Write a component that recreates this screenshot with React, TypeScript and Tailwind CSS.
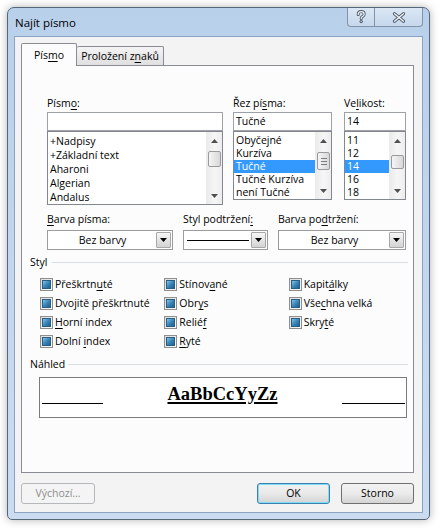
import React from "react";

function U({ children }: { children: React.ReactNode }) {
  return <span className="underline decoration-[1px] underline-offset-[2px]">{children}</span>;
}

function TriUp() {
  return (
    <svg width="7" height="4" viewBox="0 0 7 4">
      <path d="M0 4 L3.5 0 L7 4Z" fill="#505050" />
    </svg>
  );
}

function TriDown({ color = "#505050" }: { color?: string }) {
  return (
    <svg width="7" height="4" viewBox="0 0 7 4">
      <path d="M0 0 L3.5 4 L7 0Z" fill={color} />
    </svg>
  );
}

function VScroll({ thumb, grip }: { thumb: string; grip?: boolean }) {
  return (
    <div className="flex w-[16px] flex-col border-l border-[#ececec] bg-gradient-to-r from-[#ebebeb] via-[#f6f6f6] to-[#ededed]">
      <div className="flex h-[17px] items-center justify-center">
        <TriUp />
      </div>
      <div className="flex-1 px-[1px]">
        <div
          className={`${thumb} flex flex-col items-center justify-center gap-[2px] rounded-[2px] border border-[#9a9a9a] bg-gradient-to-r from-[#f5f5f5] to-[#d8d8d8]`}
        >
          {grip && (
            <>
              <div className="h-px w-[6px] bg-[#7c7c7c]" />
              <div className="h-px w-[6px] bg-[#7c7c7c]" />
              <div className="h-px w-[6px] bg-[#7c7c7c]" />
            </>
          )}
        </div>
      </div>
      <div className="flex h-[17px] items-center justify-center">
        <TriDown />
      </div>
    </div>
  );
}

function Combo({ w, children }: { w: string; children: React.ReactNode }) {
  return (
    <div className={`${w} flex h-[20px] border border-[#9c9c9c] bg-white p-[1px]`}>
      <div className="flex flex-1 items-center justify-center leading-[16px]">{children}</div>
      <div className="flex w-[15px] items-center justify-center rounded-[1px] border border-[#a8a8a8] bg-gradient-to-b from-[#f6f6f6] to-[#d3d3d3]">
        <TriDown color="#000" />
      </div>
    </div>
  );
}

function Check({ children }: { children: React.ReactNode }) {
  return (
    <div className="flex h-[19px] items-center gap-[2px]">
      <span className="flex h-[13px] w-[13px] items-center justify-center border border-[#8e8f8f] bg-gradient-to-br from-[#dedede] to-[#fbfbfb]">
        <span className="h-[9px] w-[9px] border border-[#2a5f85] bg-gradient-to-br from-[#86c3e6] via-[#3a86b8] to-[#215f8e]" />
      </span>
      <span className="leading-[15px]">{children}</span>
    </div>
  );
}

export default function App() {
  const fonts = ["+Nadpisy", "+Základní text", "Aharoni", "Algerian", "Andalus"];
  const styles = ["Obyčejné", "Kurzíva", "Tučné", "Tučné Kurzíva", "není Tučné"];
  const sizes = ["11", "12", "14", "16", "18"];

  return (
    <div className="h-[531px] w-[441px] bg-white pl-[7px] pt-[7px] font-['Open_Sans',sans-serif] text-[10.5px] text-black">
      <div className="flex h-[513px] w-[423px] flex-col rounded-t-[7px] rounded-b-[5px] border border-[#55657a] bg-gradient-to-b from-[#b9d0eb] to-[#cbdcf1] shadow-[0_0_8px_rgba(0,0,0,0.3)]">
        {/* title bar */}
        <div className="flex h-[28px] items-start justify-between pr-[6px]">
          <div className="ml-[7px] mt-[7px] text-[11.5px] leading-[16px]">Najít písmo</div>
          <div className="flex h-[19px] overflow-hidden rounded-b-[4px] border border-t-0 border-[#8193aa] bg-gradient-to-b from-[#dbe7f4] to-[#c6d8ed]">
            <div className="flex w-[27px] items-center justify-center border-r border-[#8193aa]">
              <svg width="12" height="14" viewBox="0 0 12 14">
                <path
                  d="M3.2 4.5 C3.2 2.6 4.6 1.6 6.2 1.6 C7.9 1.6 9.2 2.6 9.2 4.2 C9.2 5.8 7.8 6.2 6.9 6.9 C6.3 7.4 6.2 7.9 6.2 8.6"
                  fill="none"
                  stroke="#4d5a6c"
                  strokeWidth="3"
                  strokeLinecap="round"
                />
                <circle cx="6.2" cy="11.6" r="1.7" fill="#4d5a6c" />
                <path
                  d="M3.2 4.5 C3.2 2.6 4.6 1.6 6.2 1.6 C7.9 1.6 9.2 2.6 9.2 4.2 C9.2 5.8 7.8 6.2 6.9 6.9 C6.3 7.4 6.2 7.9 6.2 8.6"
                  fill="none"
                  stroke="#f4f7fb"
                  strokeWidth="1.2"
                  strokeLinecap="round"
                />
                <circle cx="6.2" cy="11.6" r="0.7" fill="#f4f7fb" />
              </svg>
            </div>
            <div className="flex w-[47px] items-center justify-center">
              <svg width="14" height="11" viewBox="0 0 14 11">
                <path d="M2.5 1.8 L11.5 9.2 M11.5 1.8 L2.5 9.2" stroke="#4d5a6c" strokeWidth="3.2" strokeLinecap="round" />
                <path d="M2.5 1.8 L11.5 9.2 M11.5 1.8 L2.5 9.2" stroke="#f4f7fb" strokeWidth="1.3" strokeLinecap="round" />
              </svg>
            </div>
          </div>
        </div>

        {/* client area */}
        <div className="mx-[6px] mb-[6px] flex flex-1 flex-col border border-[#8ba3c2] bg-[#f3f3f3] pb-[8px] pl-[6px] pr-[8px] pt-[6px]">
          {/* tabs */}
          <div className="flex items-end">
            <div className="relative z-10 -mb-px flex h-[23px] w-[56px] items-center justify-center rounded-t-[2px] border border-b-0 border-[#898c95] bg-[#fcfcfc] pt-[2px]">
              Pís<U>m</U>o
            </div>
            <div className="flex h-[19px] w-[87px] items-center justify-center rounded-t-[2px] border border-b-0 border-l-0 border-[#898c95] bg-gradient-to-b from-[#f4f4f4] to-[#e0e0e0] pt-[1px]">
              Proložení z<U>n</U>aků
            </div>
          </div>

          {/* panel */}
          <div className="flex h-[408px] flex-col border border-[#898c95] bg-[#fcfcfc]">
            {/* font / style / size */}
            <div className="ml-[25px] mt-[30px] flex gap-[10px]">
              <div className="flex w-[176px] flex-col">
                <div className="h-[15px] leading-[15px]">
                  Písm<U>o</U>:
                </div>
                <div className="mt-[1px] h-[19px] border border-[#9ea2a8] bg-white" />
                <div className="flex h-[74px] border border-[#828790] bg-white">
                  <div className="flex-1 pt-[2px]">
                    {fonts.map((f) => (
                      <div key={f} className="h-[14px] pl-[2px] leading-[14px]">
                        {f}
                      </div>
                    ))}
                  </div>
                  <VScroll thumb="mt-[2px] h-[16px]" />
                </div>
              </div>

              <div className="flex w-[99px] flex-col">
                <div className="h-[15px] leading-[15px]">
                  Řez pí<U>s</U>ma:
                </div>
                <div className="mt-[1px] flex h-[19px] items-center border border-[#9ea2a8] bg-white pl-[2px]">Tučné</div>
                <div className="flex h-[69px] border border-[#828790] bg-white">
                  <div className="flex-1 pt-[2px]">
                    {styles.map((s) => (
                      <div
                        key={s}
                        className={
                          s === "Tučné"
                            ? "h-[13px] whitespace-nowrap bg-[#3399ff] pl-[2px] leading-[13px] text-white"
                            : "h-[13px] whitespace-nowrap pl-[2px] leading-[13px]"
                        }
                      >
                        {s}
                      </div>
                    ))}
                  </div>
                  <VScroll thumb="mt-[3px] h-[18px]" grip />
                </div>
              </div>

              <div className="ml-[2px] flex w-[62px] flex-col">
                <div className="h-[15px] leading-[15px]">
                  Ve<U>l</U>ikost:
                </div>
                <div className="mt-[1px] flex h-[19px] items-center border border-[#9ea2a8] bg-white pl-[2px]">14</div>
                <div className="flex h-[69px] border border-[#828790] bg-white">
                  <div className="flex-1 pt-[2px]">
                    {sizes.map((s) => (
                      <div
                        key={s}
                        className={
                          s === "14"
                            ? "h-[13px] bg-[#3399ff] pl-[2px] leading-[13px] text-white"
                            : "h-[13px] pl-[2px] leading-[13px]"
                        }
                      >
                        {s}
                      </div>
                    ))}
                  </div>
                  <VScroll thumb="mt-[6px] h-[14px]" />
                </div>
              </div>
            </div>

            {/* colours / underline */}
            <div className="ml-[25px] mt-[7px] flex gap-[10px]">
              <div className="flex flex-col">
                <div className="h-[15px] leading-[15px]">
                  <U>B</U>arva písma:
                </div>
                <div className="mt-[3px]">
                  <Combo w="w-[126px]">Bez barvy</Combo>
                </div>
              </div>
              <div className="flex flex-col">
                <div className="h-[15px] leading-[15px]">
                  Styl podtržení<U>:</U>
                </div>
                <div className="mt-[3px]">
                  <Combo w="w-[85px]">
                    <div className="mx-[2px] h-px w-full bg-black" />
                  </Combo>
                </div>
              </div>
              <div className="flex flex-col">
                <div className="h-[15px] leading-[15px]">
                  Barva po<U>d</U>tržení:
                </div>
                <div className="mt-[3px]">
                  <Combo w="w-[128px]">Bez barvy</Combo>
                </div>
              </div>
            </div>

            {/* Styl */}
            <div className="ml-[8px] mr-[5px] mt-[5px] flex h-[15px] items-center gap-[5px]">
              <span className="leading-[15px]">Styl</span>
              <div className="h-px flex-1 bg-[#d6dde3]" />
            </div>
            <div className="ml-[18px] mt-[5px] flex">
              <div className="flex w-[126px] flex-col">
                <Check>
                  Přeškrtn<U>u</U>té
                </Check>
                <Check>Dvojitě přeškrtnuté</Check>
                <Check>
                  <U>H</U>orní index
                </Check>
                <Check>
                  Dolní <U>i</U>ndex
                </Check>
              </div>
              <div className="flex w-[126px] flex-col">
                <Check>
                  Stínov<U>a</U>né
                </Check>
                <Check>
                  Obr<U>y</U>s
                </Check>
                <Check>
                  Relié<U>f</U>
                </Check>
                <Check>
                  <U>R</U>yté
                </Check>
              </div>
              <div className="flex w-[126px] flex-col">
                <Check>
                  Kapit<U>á</U>lky
                </Check>
                <Check>
                  Vše<U>c</U>hna velká
                </Check>
                <Check>
                  Skry<U>t</U>é
                </Check>
              </div>
            </div>

            {/* Náhled */}
            <div className="ml-[8px] mr-[5px] mt-[6px] flex h-[15px] items-center gap-[3px]">
              <span className="leading-[15px]">Náhled</span>
              <div className="h-px flex-1 bg-[#d6dde3]" />
            </div>
            <div className="ml-[17px] mt-[5px] flex h-[41px] w-[368px] border border-[#7b7b7b] bg-white">
              <div className="mb-[13px] ml-[2px] h-px w-[61px] self-end bg-black" />
              <div className="flex flex-1 justify-center">
                <span className="mt-[5px] font-['Liberation_Serif',serif] text-[18.5px] font-bold leading-[22px] underline decoration-[1.5px] underline-offset-[2px]">
                  AaBbCcYyZz
                </span>
              </div>
              <div className="mb-[13px] mr-[1px] h-px w-[63px] self-end bg-black" />
            </div>
          </div>

          {/* buttons */}
          <div className="mt-[10px] flex h-[21px]">
            <div className="flex w-[74px] items-center justify-center rounded-[3px] border border-[#b4b8bb] bg-[#f4f4f4] text-[#8d8d8d]">
              Výchozí...
            </div>
            <div className="ml-auto flex w-[73px] items-center justify-center rounded-[3px] border border-[#3c7fb1] bg-gradient-to-b from-[#f2f2f2] via-[#e9e9e9] to-[#d4d4d4] shadow-[inset_0_0_0_1px_#7fdcf5]">
              OK
            </div>
            <div className="ml-[11px] flex w-[73px] items-center justify-center rounded-[3px] border border-[#707070] bg-gradient-to-b from-[#f2f2f2] via-[#ebebeb] to-[#d4d4d4]">
              Storno
            </div>
          </div>
        </div>
      </div>
    </div>
  );
}
